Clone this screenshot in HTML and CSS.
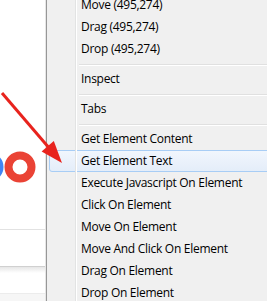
FILE: index.html
```html
<!DOCTYPE html>
<html lang="en">
<head>
  <meta charset="UTF-8"/>
  <title>Context menu</title>
  <link rel="stylesheet" href="styles.css">
</head>
<body>
  <div class="screen">
    <div class="page">
      <div class="logo-row">
        <svg class="logo" width="46" height="40" viewBox="0 0 46 40">
          <circle cx="-11" cy="17" r="11" fill="none" stroke="#4285f4" stroke-width="7"/>
          <circle cx="20" cy="17" r="11.5" fill="none" stroke="#ea4335" stroke-width="8"/>
        </svg>
      </div>
      <div class="rule"></div>
      <div class="blank"></div>
      <div class="bar"></div>
      <div class="footer"></div>
    </div>

    <div class="menu">
      <div class="icon-col"></div>
      <ul class="items">
        <li>Move (495,274)</li>
        <li>Drag (495,274)</li>
        <li>Drop (495,274)</li>
        <li class="sep"></li>
        <li>Inspect</li>
        <li class="sep"></li>
        <li>Tabs</li>
        <li class="sep"></li>
        <li>Get Element Content</li>
        <li class="hover">Get Element Text</li>
        <li>Execute Javascript On Element</li>
        <li>Click On Element</li>
        <li>Move On Element</li>
        <li>Move And Click On Element</li>
        <li>Drag On Element</li>
        <li>Drop On Element</li>
      </ul>
    </div>
  </div>

  <svg class="arrow" width="267" height="301" viewBox="0 0 267 301">
    <line x1="2" y1="93" x2="50" y2="149" stroke="#e8231d" stroke-width="3"/>
    <polygon points="62,163 41.6,151.5 53.8,141.1" fill="#e8231d"/>
  </svg>
</body>
</html>
```

FILE: styles.css
```css
body { margin:0; background:#fff; overflow:hidden; font-family:"Open Sans", "Noto Sans", sans-serif; }
.screen { display:flex; width:267px; height:301px; overflow:hidden; }

.page { width:46px; flex:none; display:flex; flex-direction:column; background:#fff; border-right:1px solid #e6e6e6; box-sizing:border-box; }
.logo-row { height:229px; padding-top:150px; box-sizing:border-box; }
.logo { display:block; }
.rule { height:1px; background:#e2e2e2; }
.blank { height:36px; }
.bar { height:26px; border-top:1px solid #d0d0d0; background:linear-gradient(#e6e6e6, #fff 6px); }
.footer { flex:1; border-top:1px solid #ececec; background:#f6f6f6; }

.menu { flex:none; width:260px; position:relative; background:#f0f0f0; border-left:1px solid #979797; }
.icon-col { position:absolute; left:28px; top:0; bottom:0; width:1px; background:#e2e3e3; border-right:1px solid #fff; }
.items { list-style:none; margin:-6px 0 0 0; padding:0 0 0 2px; }
.items li { height:22px; line-height:22px; padding-left:32px; font-size:12px; letter-spacing:-0.28px; color:#000; white-space:nowrap; box-sizing:border-box; }
.items li.sep { height:8px; padding:4px 0 0 30px; }
.items li.sep::after { content:""; display:block; height:1px; background:#e0e0e0; border-bottom:1px solid #fff; }
.items li.hover { border:1px solid #a8cdf5; border-radius:3px; background:linear-gradient(#f1f6fd, #e4edf9); line-height:20px; padding-left:31px; margin-right:-4px; }

.arrow { position:absolute; left:0; top:0; pointer-events:none; }
```
